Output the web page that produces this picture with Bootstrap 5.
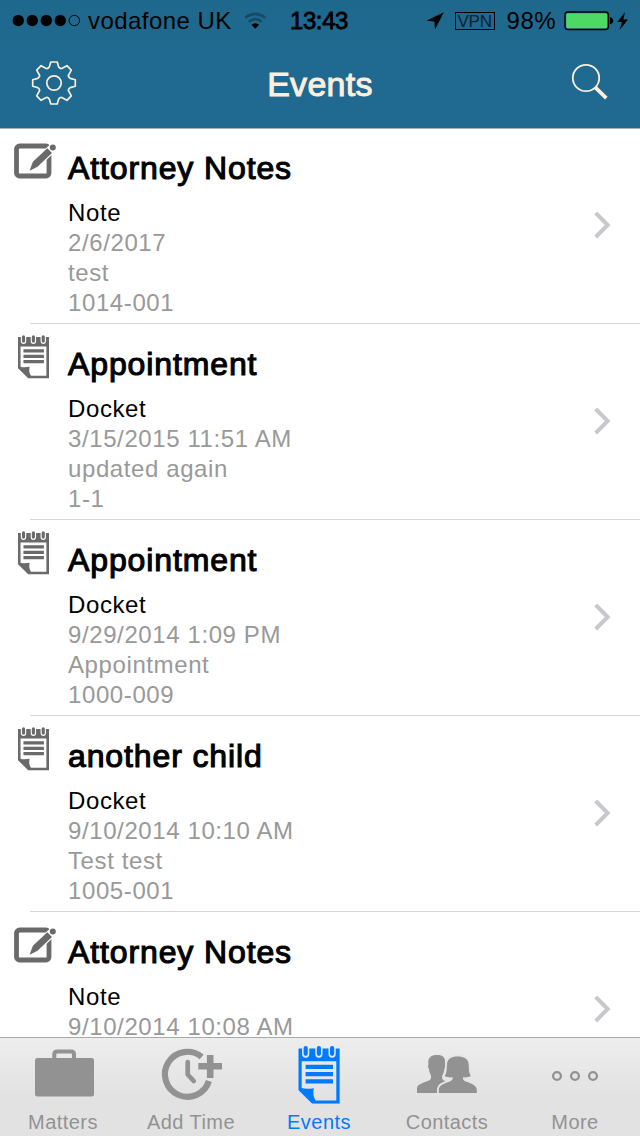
<!DOCTYPE html>
<html lang="en">
<head>
<meta charset="utf-8">
<meta name="viewport" content="width=device-width, initial-scale=1">
<title>Events</title>
<link href="https://cdn.jsdelivr.net/npm/bootstrap@5.3.0/dist/css/bootstrap.min.css" rel="stylesheet">
<style>
  body { font-family: "Liberation Sans", Arial, sans-serif; height: 1136px; overflow: hidden; background: #fff; color: #000; }
  svg { display: block; flex: none; }
  .top-area { height: 128px; background: linear-gradient(#1f688d, #206a92); box-shadow: 0 1px 0 #a9b0b3; z-index: 1; }
  .status { height: 41px; line-height: 41px; font-size: 24px; letter-spacing: .45px; padding: 0 11px 0 12px; }
  .side { flex: 1 1 0; }
  .carrier { margin-left: 6px; }
  .clock-text { font-weight: 400; -webkit-text-stroke: .8px; letter-spacing: -.4px; margin: 0 1px 0 -2px; }
  .vpn { width: 40px; height: 18px; border: 1px solid #000; font-size: 17px; line-height: 17px; letter-spacing: -.3px; color: #0a222e; margin: 0 12px 0 11px; }
  .title-bar { height: 87px; padding: 0 31px; color: #fdefdc; }
  .title-bar svg { margin-top: -2px; }
  .title-bar h1 { font-size: 34px; font-weight: 400; -webkit-text-stroke: 1px; letter-spacing: .3px; line-height: 87px; margin: 0 0 0 -8px; }
  .event { height: 196px; padding: 0 29px 0 0; }
  .event::after { content: ""; position: absolute; left: 30px; right: 0; bottom: 0; height: 1px; background: #d6d6d8; }
  .chevron { margin-bottom: 2px; }
  .event-icon { width: 68px; padding: 14px 0 0 13px; color: #6a6a6a; }
  .event-icon.pad-icon { padding: 11px 0 0 18px; }
  .event-text { padding-top: 20px; font-size: 24px; line-height: 30px; letter-spacing: .6px; color: #999; }
  .event-text h2 { font-size: 32px; line-height: 40px; font-weight: 400; -webkit-text-stroke: 1.1px; letter-spacing: .88px; margin: 0 0 10px; color: #000; }
  .kind { color: #000; }
  .tabs { height: 99px; border-top: 1px solid #a9a9a9; background: linear-gradient(#ededed, #e2e2e2 60%); z-index: 1; }
  .tab { width: 128px; color: #929292; font-size: 20px; line-height: 24px; letter-spacing: .45px; text-decoration: none; }
  .tab span { margin-left: -2px; }
  .tab.active { color: #007aff; }
</style>
</head>
<body class="d-flex flex-column">
<svg width="0" height="0" class="position-absolute">
  <symbol id="pad" viewBox="0 0 41.5 58">
    <path fill="currentColor" fill-rule="evenodd" d="M0 2.6H3.8V8a3.6 4 0 0 0 7.200 0V2.600H17V8a3.600 4 0 0 0 7.200 0V2.600H30.200V8a3.600 4 0 0 0 7.200 0V2.600H41.500V58H14L0 44.300ZM3.400 15.400V42.300C7 43.400 11.500 43 15.600 42.400 14.500 47 15 51 17.400 54.600H38V15.400Z"/>
    <path d="M7.400 2.200V8M20.600 2.200V8M33.800 2.200V8" stroke="currentColor" stroke-width="4.200" stroke-linecap="round"/>
    <path d="M7.300 21H34.700M7.300 28.400H34.700M7.300 35.600H34.700" stroke="currentColor" stroke-width="4.300"/>
  </symbol>
  <symbol id="note" viewBox="0 0 44 38">
    <rect x="3.500" y="4" width="32.500" height="30" rx="3" fill="none" stroke="currentColor" stroke-width="4.800"/>
    <path d="M15 30 19.500 19 37 2.500 44 8 26 25Z" fill="#fff"/>
    <path d="M16.600 28.700 19.900 19.800 34.300 6.300 39 10.900 24.500 24.700Z" fill="currentColor"/>
    <circle cx="39.800" cy="5.500" r="3" fill="currentColor"/>
  </symbol>
  <symbol id="chev" viewBox="0 0 17 28"><path d="M1.700 2 13.700 14 1.700 26" fill="none" stroke="#c7c7cc" stroke-width="3.900"/></symbol>
</svg>

<header class="top-area position-relative flex-shrink-0">
  <div class="status d-flex">
    <div class="side d-flex align-items-center">
      <svg width="70" height="14" viewBox="0 0 70 14"><circle cx="6.300" cy="6.500" r="5.700"/><circle cx="20.300" cy="6.500" r="5.700"/><circle cx="34.300" cy="6.500" r="5.700"/><circle cx="48.300" cy="6.500" r="5.700"/><circle cx="62.300" cy="6.500" r="5.200" fill="none" stroke="#000"/></svg>
      <span class="carrier text-nowrap">vodafone UK</span>
      <svg class="ms-2 ps-1" width="30" height="20" viewBox="0 0 30 20"><g fill="none" stroke="#164a66" stroke-width="3"><path d="M1.500 6.200Q13 -2.800 24.500 6.200"/><path d="M5.500 11Q13 4.700 20.500 11"/></g><path d="M8.600 14.400Q13 10.800 17.400 14.400L13 19Z"/></svg>
    </div>
    <div class="clock-text">13:43</div>
    <div class="side d-flex align-items-center justify-content-end">
      <svg width="18" height="18" viewBox="0 0 18 18"><path d="M17.800 .3 9 17.500 8.400 9.600 .4 8.700Z"/></svg>
      <span class="vpn text-center">VPN</span>
      <span>98%</span>
      <svg class="ms-2" width="65" height="20" viewBox="0 0 65 20"><rect x="1" y="1" width="43.500" height="17.500" rx="3" fill="none" stroke="#000" stroke-width="1.400"/><rect x="2.200" y="2.200" width="41" height="15" rx="1.500" fill="#4cd964"/><path d="M46 6.300Q49.200 7 49.200 9.800T46 13.200Z"/><path d="M61 1 53.300 10.900H58L55.600 19 64 8.400H59.300Z"/></svg>
    </div>
  </div>
  <div class="title-bar d-flex align-items-center justify-content-between">
    <svg width="46" height="46" viewBox="-23 -22 46 46" fill="none" stroke="currentColor" stroke-width="1.700" stroke-linejoin="round"><circle r="7.200"/><path d="M-3.200 -21 3.200 -21 4.600 -16.200Q6.500 -13.600 8.200 -14.700L12.900 -17.300 17.300 -12.900 14.700 -8.200Q13.600 -6.500 16.200 -4.600L21.300 -3.200 21.300 3.200 16.200 4.600Q13.600 6.500 14.700 8.200L17.300 12.900 12.900 17.300 8.200 14.700Q6.500 13.600 4.600 16.200L3.200 21 -3.200 21 -4.600 16.200Q-6.500 13.600 -8.200 14.700L-12.900 17.300 -17.300 12.900 -14.700 8.200Q-13.600 6.500 -16.200 4.600L-21.300 3.200 -21.300 -3.200 -16.200 -4.600Q-13.600 -6.500 -14.700 -8.200L-17.300 -12.900 -12.900 -17.300 -8.200 -14.700Q-6.500 -13.600 -4.600 -16.200Z"/></svg>
    <h1>Events</h1>
    <svg width="38" height="42" viewBox="0 0 38 42" fill="none" stroke="currentColor"><circle cx="15" cy="15" r="13.200" stroke-width="1.800"/><path d="M24.500 24.700 35.300 35.200" stroke-width="3.700"/></svg>
  </div>
</header>

<main class="flex-grow-1 overflow-hidden">
  <article class="event d-flex position-relative">
    <div class="event-icon flex-shrink-0"><svg width="44" height="38"><use href="#note"/></svg></div>
    <div class="event-text flex-grow-1"><h2>Attorney Notes</h2><div class="kind">Note</div><div>2/6/2017</div><div>test</div><div>1014-001</div></div>
    <svg class="chevron align-self-center" width="17" height="28"><use href="#chev"/></svg>
  </article>
  <article class="event d-flex position-relative">
    <div class="event-icon pad-icon flex-shrink-0"><svg width="31" height="43.500"><use href="#pad"/></svg></div>
    <div class="event-text flex-grow-1"><h2>Appointment</h2><div class="kind">Docket</div><div>3/15/2015 11:51 AM</div><div>updated again</div><div>1-1</div></div>
    <svg class="chevron align-self-center" width="17" height="28"><use href="#chev"/></svg>
  </article>
  <article class="event d-flex position-relative">
    <div class="event-icon pad-icon flex-shrink-0"><svg width="31" height="43.500"><use href="#pad"/></svg></div>
    <div class="event-text flex-grow-1"><h2>Appointment</h2><div class="kind">Docket</div><div>9/29/2014 1:09 PM</div><div>Appointment</div><div>1000-009</div></div>
    <svg class="chevron align-self-center" width="17" height="28"><use href="#chev"/></svg>
  </article>
  <article class="event d-flex position-relative">
    <div class="event-icon pad-icon flex-shrink-0"><svg width="31" height="43.500"><use href="#pad"/></svg></div>
    <div class="event-text flex-grow-1"><h2>another child</h2><div class="kind">Docket</div><div>9/10/2014 10:10 AM</div><div>Test test</div><div>1005-001</div></div>
    <svg class="chevron align-self-center" width="17" height="28"><use href="#chev"/></svg>
  </article>
  <article class="event d-flex position-relative">
    <div class="event-icon flex-shrink-0"><svg width="44" height="38"><use href="#note"/></svg></div>
    <div class="event-text flex-grow-1"><h2>Attorney Notes</h2><div class="kind">Note</div><div>9/10/2014 10:08 AM</div></div>
    <svg class="chevron align-self-center" width="17" height="28"><use href="#chev"/></svg>
  </article>
</main>

<nav class="tabs d-flex position-relative flex-shrink-0">
  <a class="tab text-center" href="#"><svg width="128" height="72" viewBox="0 0 128 72"><rect x="35" y="20" width="59" height="38.400" rx="2.500" fill="currentColor"/><path d="M54.300 20V16.500Q54.300 13.500 57.300 13.500H71Q74 13.500 74 16.500V20" fill="none" stroke="currentColor" stroke-width="4"/></svg><span>Matters</span></a>
  <a class="tab text-center" href="#"><svg width="128" height="72" viewBox="0 0 128 72" fill="none" stroke="currentColor"><path d="M73.700 18.900A22.500 22.500 0 1 0 80.900 43" stroke-width="6.200"/><path d="M59.700 24V36.500L65.700 43" stroke-width="4.700" stroke-linecap="round" stroke-linejoin="round"/><path d="M82.200 17V40M70.300 28.200H94" stroke-width="6.600"/></svg><span>Add Time</span></a>
  <a class="tab active text-center" href="#"><svg width="128" height="72" viewBox="0 0 128 72"><use href="#pad" x="42.300" y="7.800" width="41.500" height="58"/></svg><span>Events</span></a>
  <a class="tab text-center" href="#"><svg width="128" height="72" viewBox="0 0 128 72"><path fill="currentColor" d="M33 55V50.500C33 46.500 39 45 44.500 42.800 47.800 41.300 47.500 38.500 46.300 36 45.300 34 45.200 33 45 31 43.900 30 43.700 27.500 44.400 26.500 43.800 19.500 46.500 17 53 17 59.500 17 61.800 19.500 61 26.500 61.700 27.500 61.400 30 60.400 31 60.200 33 60 34 59 36 57.800 38.500 57.500 41.300 60.500 42.800L70 47V55Z"/><path fill="currentColor" stroke="#e5e5e5" stroke-width="3.600" paint-order="stroke" d="M54.800 55V52C54.800 47 60 45.500 66.500 43.200 68.500 42.200 68.800 41 68.600 39.300 65.500 39.600 63 39.300 60.800 38 63.300 34 62.500 30 63 26 63.700 20.500 67.500 18.500 73.500 18.500 80 18.500 84 20.500 84.600 26 85.100 31 84.500 34 86.800 38 84.500 39.300 82 39.600 79 39.300 78.800 41 79 42.200 81 43.200 87.500 45.500 92.800 47 92.800 52V55Z"/><path d="M32 56.200H95" stroke="#e3e3e3" stroke-width="2.400"/></svg><span>Contacts</span></a>
  <a class="tab text-center" href="#"><svg width="128" height="72" viewBox="0 0 128 72" fill="none" stroke="currentColor" stroke-width="2.300"><circle cx="45" cy="38" r="3.900"/><circle cx="63" cy="38" r="3.900"/><circle cx="81" cy="38" r="3.900"/></svg><span>More</span></a>
</nav>
<script src="https://cdn.jsdelivr.net/npm/bootstrap@5.3.0/dist/js/bootstrap.bundle.min.js"></script>
</body>
</html>
